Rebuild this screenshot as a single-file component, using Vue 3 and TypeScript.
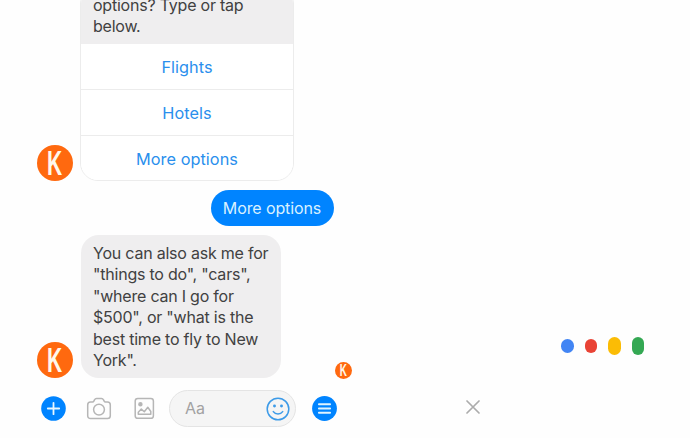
<script setup lang="ts">
import { h, type FunctionalComponent } from 'vue'

const prompt: string[] = ['options? Type or tap', 'below.']
const actions: string[] = ['Flights', 'Hotels', 'More options']
const reply: string[] = [
  'You can also ask me for',
  '"things to do", "cars",',
  '"where can I go for',
  '$500", or "what is the',
  'best time to fly to New',
  'York".',
]
const voiceDots: string[] = ['blue', 'red', 'yellow', 'green']

const Avatar: FunctionalComponent = () =>
  h('svg', { viewBox: '0 0 36 36', 'aria-label': 'K' }, [
    h('circle', { cx: 18, cy: 18, r: 18, fill: '#ff690f' }),
    h(
      'text',
      {
        transform: 'translate(9.9 30.2) scale(.6 1)',
        'font-family': '"Liberation Sans", sans-serif',
        'font-weight': 700,
        'font-size': 35,
        fill: '#fff8ec',
      },
      'K',
    ),
  ])
</script>

<template>
  <main class="page">
    <section class="chat">
      <div class="row first">
        <Avatar class="avatar" />
        <div class="card">
          <div class="prompt">
            <div v-for="line in prompt" :key="line"><span class="line">{{ line }}</span></div>
          </div>
          <button v-for="action in actions" :key="action" class="action">{{ action }}</button>
        </div>
      </div>

      <div class="sent">More options</div>

      <div class="row second">
        <Avatar class="avatar" />
        <div class="bubble">
          <div v-for="line in reply" :key="line"><span class="line">{{ line }}</span></div>
        </div>
        <Avatar class="seen" />
      </div>

      <div class="composer">
        <svg class="plus" width="25" height="25" viewBox="0 0 25 25">
          <circle cx="12.5" cy="12.5" r="12.3" fill="#0084ff" />
          <path d="M12.5 6.8v11.4M6.8 12.5h11.4" stroke="#e8f7ff" stroke-width="1.8" stroke-linecap="round" />
        </svg>
        <svg class="camera" width="26" height="24" viewBox="0 0 26 24" fill="none" stroke="#b6b6b6" stroke-width="1.5">
          <path d="M4.500 5.100h2c.8 0 1.100-.4 1.500-1.200l.6-1.200c.4-.9.9-1.300 1.900-1.300h5c1 0 1.500.4 1.900 1.300l.6 1.200c.4.8.7 1.200 1.500 1.200h2c1.700 0 2.800 1.100 2.800 2.800v10.800c0 1.700-1.100 2.800-2.800 2.800h-17c-1.700 0-2.800-1.100-2.800-2.800V7.900c0-1.700 1.100-2.800 2.800-2.800Z" />
          <circle cx="13" cy="12.600" r="5.400" />
        </svg>
        <svg class="photo" width="21" height="23" viewBox="0 0 21 23" fill="none" stroke="#b6b6b6" stroke-width="1.5" stroke-linejoin="round">
          <rect x="1.200" y="1.500" width="18.200" height="19.800" rx="2.600" />
          <circle cx="6.400" cy="7.200" r="1.500" fill="#b6b6b6" />
          <path d="M4.300 17.200v-2l3-3.100 3 2.700 3.500-4.500 3 4.200v2.700Z" />
        </svg>
        <div class="field">
          <span class="hint">Aa</span>
          <svg width="24" height="24" viewBox="0 0 24 24" fill="none" stroke="#3d9be8" stroke-width="1.500" stroke-linecap="round">
            <circle cx="12" cy="12" r="10.800" />
            <path d="M7.300 14.600c2.200 3.100 7.200 3.100 9.400 0" />
            <circle cx="8.500" cy="9" r=".7" fill="#3d9be8" />
            <circle cx="15.500" cy="9" r=".7" fill="#3d9be8" />
          </svg>
        </div>
        <svg class="menu" width="25" height="25" viewBox="0 0 25 25">
          <circle cx="12.500" cy="12.500" r="12.400" fill="#0084ff" />
          <path d="M6.900 8.200h11.200M6.900 12.500h11.200M6.900 16.800h11.200" stroke="#dff4ff" stroke-width="1.900" stroke-linecap="round" />
        </svg>
      </div>
    </section>

    <section class="voice">
      <div class="dots">
        <i v-for="color in voiceDots" :key="color" class="dot" :class="color"></i>
      </div>
      <svg class="close" width="14" height="14" viewBox="0 0 14 14">
        <path d="M1 1l12 12M13 1L1 13" stroke="#acacac" stroke-width="1.700" stroke-linecap="round" />
      </svg>
    </section>
  </main>
</template>

<style>
body {
  background: #fefefe;
}
</style>

<style scoped>
.page {
  display: flex;
  width: 690px;
  height: 438px;
  overflow: hidden;
  font-family: Inter, 'Liberation Sans', sans-serif;
  font-size: 16px;
  line-height: 21.5px;
  color: #414141;
}
.chat {
  display: flex;
  flex-direction: column;
  box-sizing: border-box;
  width: 354px;
  padding-left: 36.500px;
}
.row {
  display: flex;
  align-items: flex-end;
}
.first {
  height: 181px;
}
.avatar {
  width: 36px;
  height: 36px;
  flex: none;
  overflow: visible;
}
.card {
  box-sizing: border-box;
  width: 214px;
  margin-left: 7.500px;
  border: 1px solid #ececec;
  border-radius: 18px;
  overflow: hidden;
}
.prompt {
  padding: 8px 12px 6.500px;
  background: #efeeef;
}
.line {
  white-space: nowrap;
  letter-spacing: -0.22px;
}
.action {
  display: block;
  box-sizing: border-box;
  width: 100%;
  height: 45px;
  padding: 3px 0 0;
  border: 0;
  background: #fff;
  color: #2a8fed;
  font: inherit;
  font-size: 16.300px;
  letter-spacing: 0.05px;
}
.action + .action {
  height: 46px;
  padding-top: 2px;
  border-top: 1px solid #ececec;
}
.action:last-child {
  height: 45px;
  padding-top: 3px;
}
.sent {
  align-self: flex-end;
  box-sizing: border-box;
  width: 123px;
  height: 36px;
  margin: 9px 20.500px 9px 0;
  border-radius: 18px;
  background: #0084ff;
  color: #d9f1ff;
  line-height: 36px;
  text-align: center;
  letter-spacing: -0.1px;
}
.second {
  height: 143px;
}
.bubble {
  box-sizing: border-box;
  width: 200px;
  height: 143px;
  margin-left: 8.500px;
  padding: 7.500px 12px;
  border-radius: 18px;
  background: #efeeef;
}
.seen {
  width: 17px;
  height: 17px;
  margin: 0 0 -1px 53.500px;
  overflow: visible;
}
.composer {
  display: flex;
  align-items: center;
  height: 37px;
  margin-top: 12px;
  padding-left: 4.500px;
}
.camera {
  margin-left: 20px;
}
.photo {
  margin-left: 21.500px;
}
.field {
  display: flex;
  align-items: center;
  justify-content: space-between;
  box-sizing: border-box;
  width: 127px;
  height: 37px;
  margin-left: 14.500px;
  padding: 0 5px 0 15px;
  border: 1px solid #e4e4e4;
  border-radius: 19px;
  background: #f5f5f5;
}
.hint {
  padding-top: 1px;
  color: #a2a2a2;
}
.menu {
  margin-left: 16px;
}
.composer svg {
  flex: none;
}
.voice {
  display: flex;
  flex: 1;
  flex-direction: column;
  padding-top: 336px;
}
.dots {
  display: flex;
  align-items: center;
  gap: 11px;
  height: 19px;
  margin-left: 207px;
}
.dot {
  width: 12.500px;
  height: 14px;
  border-radius: 7px;
}
.blue {
  background: #4285f4;
}
.red {
  background: #e94335;
}
.yellow {
  height: 18px;
  background: #fbbc05;
}
.green {
  height: 18px;
  background: #34a853;
}
.close {
  margin: 45px 0 0 112px;
}
</style>
